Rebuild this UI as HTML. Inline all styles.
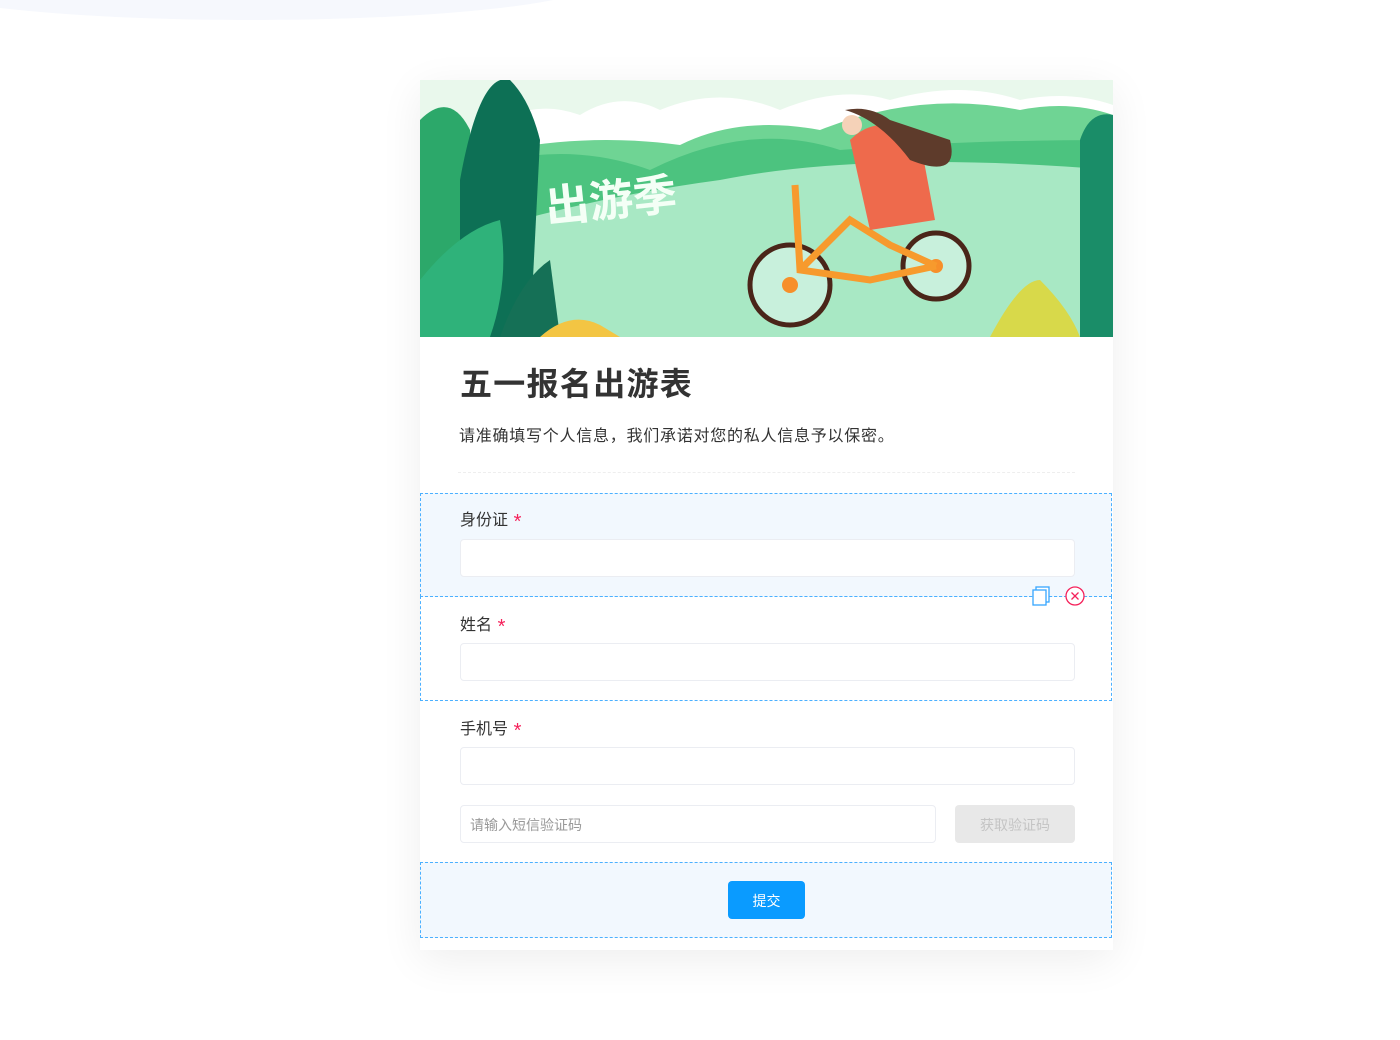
<!DOCTYPE html>
<html><head><meta charset="utf-8"><style>
body{margin:0;width:1400px;height:1040px;background:#fff;position:relative;overflow:hidden;font-family:"Liberation Sans","Noto Sans CJK SC",sans-serif;color:#333}
.abs{position:absolute}
.card{left:420px;top:80px;width:693px;height:870px;background:#fff;box-shadow:0 10px 40px rgba(0,0,0,0.07)}
.sec{left:420px;width:690px;border:1.5px dashed #4bb0ff}
.lbl{font-size:16px;color:#333;line-height:22px}
.lbl b{color:#f5225b;font-weight:normal;font-size:20px;vertical-align:-3px}
.inp{left:460px;width:613px;height:36px;border:1px solid #ebedf2;border-radius:4px;background:#fff}
</style></head><body>
<div class="abs" style="left:-100px;top:-60px;width:700px;height:80px;border-radius:50%;background:#f6f8fd"></div>
<div class="abs card"></div>
<svg class="abs" style="left:420px;top:80px" width="693" height="257" viewBox="0 0 693 257">
<rect width="693" height="257" fill="#e9f8ec"/>
<path d="M80 40 Q120 20 160 35 Q200 10 240 30 Q300 5 360 30 Q420 5 470 20 Q540 0 600 20 Q650 10 693 25 V80 H80Z" fill="#fff"/>
<path d="M40 257 V80 Q150 50 260 65 Q320 35 400 50 Q500 10 600 30 Q650 20 693 35 V257Z" fill="#6fd494"/>
<path d="M0 257 V110 Q120 50 230 90 Q330 40 420 70 Q540 60 693 60 V257Z" fill="#4cc37f"/>
<path d="M0 257 V170 Q150 120 300 100 Q450 70 693 90 V257Z" fill="#a8e8c4"/>
<path d="M0 257 V40 Q30 10 50 50 L60 257Z" fill="#2ca86a"/>
<path d="M40 100 Q60 -10 90 0 Q110 20 120 60 L110 257 H40Z" fill="#0d7055"/>
<path d="M0 257 V200 Q40 150 80 140 Q90 200 70 257Z" fill="#2fb27a"/>
<path d="M80 257 Q100 200 130 180 L140 257Z" fill="#157056"/>
<path d="M660 257 V60 Q670 30 693 35 V257Z" fill="#1a8d68"/>
<path d="M570 257 Q600 200 620 200 Q650 230 660 257Z" fill="#d8d94a"/>
<path d="M120 257 Q150 230 180 245 L200 257Z" fill="#f3c543"/>
<text x="125" y="135" font-size="44" font-weight="bold" fill="#f4fff6" transform="rotate(-6 200 120)" font-family="'Noto Sans CJK SC',sans-serif">出游季</text>
<circle cx="370" cy="205" r="40" fill="#c8f0dc" stroke="#4a2519" stroke-width="5"/>
<circle cx="516" cy="186" r="33" fill="#c8f0dc" stroke="#4a2519" stroke-width="5"/>
<circle cx="370" cy="205" r="8" fill="#f78f2a"/><circle cx="516" cy="186" r="7" fill="#f78f2a"/>
<path d="M375 105 L380 190 L450 200 L516 186 M380 190 L430 140 L470 165 L516 186" stroke="#f79a2d" stroke-width="7" fill="none"/>
<path d="M430 60 Q460 30 500 60 L515 140 L450 150Z" fill="#ee6a4c"/>
<path d="M425 30 Q460 40 490 80 Q540 100 530 60 Q500 50 470 40 Q450 25 425 30Z" fill="#5e3b2b"/>
<circle cx="432" cy="45" r="10" fill="#f5d2b8"/>
</svg>
<div class="abs" style="left:460px;top:362px;font-size:32px;font-weight:bold;color:#333;line-height:44px;letter-spacing:1.3px">五一报名出游表</div>
<div class="abs" style="left:459px;top:426px;font-size:16px;color:#333;line-height:22px;letter-spacing:0.75px">请准确填写个人信息，我们承诺对您的私人信息予以保密。</div>
<div class="abs" style="left:458px;top:472px;width:617px;border-top:1px dashed #eee"></div>
<div class="abs sec" style="top:493px;height:102px;background:#f2f8fe"></div>
<div class="abs sec" style="top:596px;height:103px"></div>
<div class="abs sec" style="top:862px;height:74px;background:#f2f8fe"></div>
<div class="abs lbl" style="left:460px;top:510px">身份证<b> *</b></div>
<div class="abs inp" style="top:539px"></div>
<div class="abs lbl" style="left:460px;top:615px">姓名<b> *</b></div>
<div class="abs inp" style="top:643px"></div>
<div class="abs lbl" style="left:460px;top:719px">手机号<b> *</b></div>
<div class="abs inp" style="top:747px"></div>
<div class="abs inp" style="top:805px;width:474px"></div>
<div class="abs" style="left:470px;top:815px;font-size:14px;color:#999">请输入短信验证码</div>
<div class="abs" style="left:955px;top:805px;width:120px;height:38px;background:#e8e8e8;border-radius:4px;color:#c4c4c4;font-size:14px;line-height:40px;text-align:center">获取验证码</div>
<div class="abs" style="left:728px;top:881px;width:77px;height:38px;background:#0a9bff;border-radius:4px;color:#fff;font-size:14px;line-height:40px;text-align:center">提交</div>
<svg class="abs" style="left:1030px;top:585px" width="60" height="24">
<rect x="6" y="2" width="13" height="15" fill="#fff" stroke="#36a6ff" stroke-width="1.3"/>
<rect x="3" y="5" width="13" height="15" fill="#fff" stroke="#36a6ff" stroke-width="1.3"/>
<circle cx="45" cy="11" r="9" fill="#fff" stroke="#f5225b" stroke-width="1.3"/>
<path d="M41.5 7.5 L48.5 14.5 M48.5 7.5 L41.5 14.5" stroke="#f5225b" stroke-width="1.3"/>
</svg>
</body></html>
